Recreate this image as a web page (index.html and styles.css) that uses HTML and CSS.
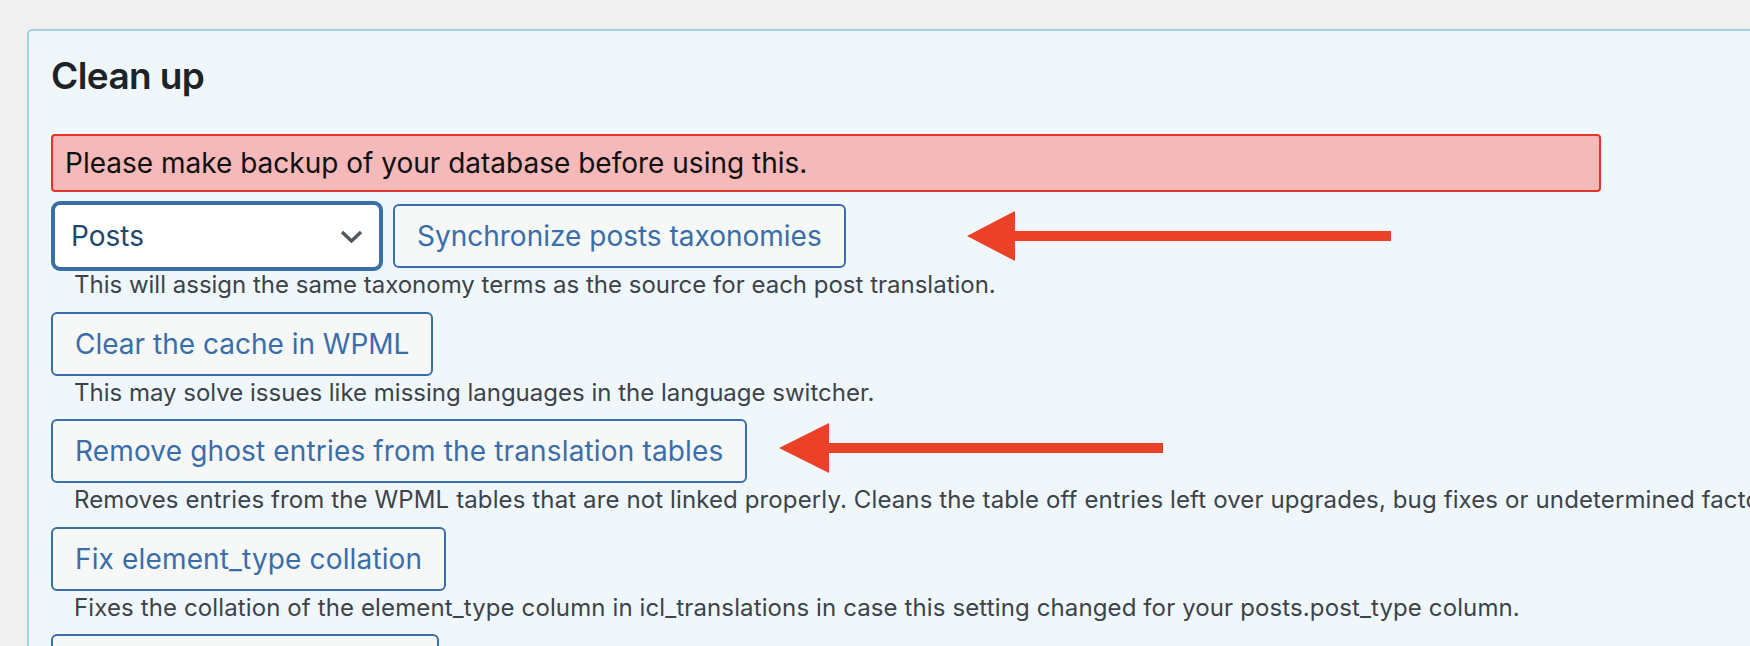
FILE: index.html
```html
<!DOCTYPE html>
<html lang="en">
<head>
<meta charset="utf-8">
<title>Clean up</title>
<link rel="stylesheet" href="styles.css">
</head>
<body>
<div class="panel">
  <h2 class="title">Clean up</h2>
  <div class="notice">Please make backup of your database before using this.</div>
  <div class="row">
    <div class="select">
      <span class="select-value">Posts</span>
      <svg class="chevron" width="23" height="13" viewBox="0 0 23 13"><polyline points="2,2 11.5,11 21,2" fill="none" stroke="#50575e" stroke-width="3.4" stroke-linecap="butt" stroke-linejoin="miter"/></svg>
    </div>
    <button class="btn">Synchronize posts taxonomies</button>
  </div>
  <p class="desc">This will assign the same taxonomy terms as the source for each post translation.</p>
  <button class="btn">Clear the cache in WPML</button>
  <p class="desc">This may solve issues like missing languages in the language switcher.</p>
  <button class="btn btn-wide">Remove ghost entries from the translation tables</button>
  <p class="desc desc-wide">Removes entries from the WPML tables that are not linked properly. Cleans the table off entries left over upgrades, bug fixes or undetermined factors.</p>
  <button class="btn btn-wide">Fix element_type collation</button>
  <p class="desc desc-wide">Fixes the collation of the element_type column in icl_translations in case this setting changed for your posts.post_type column.</p>
  <button class="btn btn-last">Set language information</button>
  <p class="desc">Sets the language information for elements that are missing it.</p>
</div>

<svg class="arrow arrow-1" width="430" height="52" viewBox="0 0 430 52"><polygon points="0,25 48,0 48,20 424,20 424,30 48,30 48,50" fill="#ea4128"/></svg>
<svg class="arrow arrow-2" width="390" height="52" viewBox="0 0 390 52"><polygon points="0,25 50,0 50,20 384,20 384,30 50,30 50,50" fill="#ea4128"/></svg>
</body>
</html>
```

FILE: styles.css
```css
html, body {
  margin: 0;
  padding: 0;
  overflow: hidden;
}
body {
  background: #f0f0f1;
  font-family: Inter, "Noto Sans", "Liberation Sans", sans-serif;
  position: relative;
  width: 1750px;
  height: 646px;
}
.panel {
  margin: 29px 0 0 27px;
  width: 1800px;
  box-sizing: border-box;
  border: 2px solid #a2d1e6;
  border-radius: 5px;
  background: #f0f7fb;
  padding: 23px 0 40px 22px;
}
.title {
  margin: 0;
  font-size: 37px;
  line-height: 44px;
  font-weight: 600;
  letter-spacing: -0.6px;
  color: #1d2327;
}
.notice {
  margin-top: 36px;
  width: 1550px;
  box-sizing: border-box;
  height: 58px;
  border: 2px solid #e5352b;
  border-radius: 4px;
  background: #f4b9b8;
  padding: 0 12px;
  font-size: 28px;
  line-height: 54px;
  color: #101010;
}
.row {
  margin-top: 12px;
  display: flex;
  align-items: center;
  gap: 10px;
  height: 64px;
}
.select {
  box-sizing: border-box;
  width: 332px;
  height: 70px;
  margin: -3px 0;
  border: 4px solid #3a6ea9;
  border-radius: 9px;
  background: #fff;
  display: flex;
  align-items: center;
  justify-content: space-between;
  padding: 0 16px 0 16px;
}
.select-value {
  font-size: 28px;
  color: #1f4870;
}
.chevron {
  display: block;
}
.btn {
  display: block;
  box-sizing: border-box;
  height: 64px;
  margin: 0;
  padding: 0 22px;
  border: 2px solid #3a6ea9;
  border-radius: 6px;
  background: #f6f7f7;
  color: #3a6ea9;
  font-family: inherit;
  font-size: 28px;
  line-height: 60px;
  white-space: nowrap;
  cursor: pointer;
}
.btn-wide {
  letter-spacing: 0.15px;
}
.btn-last {
  min-width: 388px;
}
.desc {
  margin: 0 0 9.5px 0;
  padding-left: 23px;
  font-size: 24px;
  line-height: 34px;
  color: #3c434a;
  white-space: nowrap;
}
.desc-wide {
  letter-spacing: 0.12px;
}
.arrow {
  position: absolute;
  display: block;
}
.arrow-1 {
  left: 967px;
  top: 211px;
}
.arrow-2 {
  left: 779px;
  top: 423px;
}
```
